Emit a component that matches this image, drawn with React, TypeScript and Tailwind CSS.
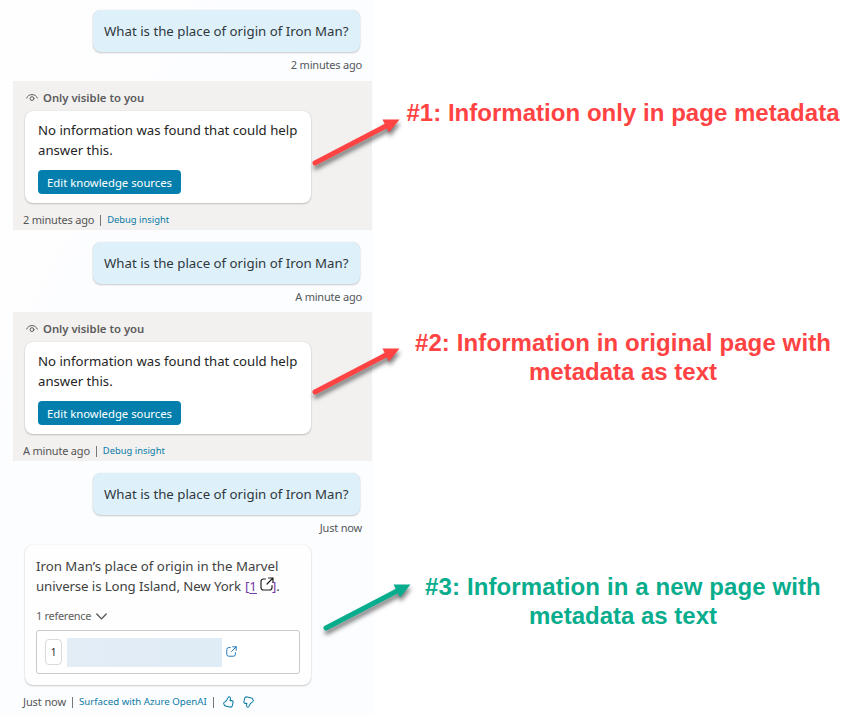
import React from "react";

const BUBBLE_SHADOW = "shadow-[0_1px_2px_rgba(0,0,0,0.2),0_0_1px_rgba(0,0,0,0.16)]";

function Question({ time }: { time: string }) {
  return (
    <div className="flex flex-col items-end pr-[13px]">
      <div className={`flex h-[42px] w-[267px] items-center rounded-lg bg-[#def1fb] pl-[11px] pt-[2px] ${BUBBLE_SHADOW}`}>
        <span className="whitespace-nowrap text-[13.25px] text-[#30383d]">What is the place of origin of Iron Man?</span>
      </div>
      <div className="mt-[5px] mr-[-2px] h-4 whitespace-nowrap text-[11px] leading-4 tracking-[-0.2px] text-[#55585a]">{time}</div>
    </div>
  );
}

function Eye() {
  return (
    <svg width="12" height="10" viewBox="0 0 12 10" fill="none" stroke="#5c5b5a" strokeWidth="1" strokeLinecap="round">
      <path d="M.7 5C1.5 2.8 3.5 1.6 6 1.6S10.500 2.800 11.300 5" />
      <circle cx="6" cy="5.600" r="1.900" />
    </svg>
  );
}

function Separator() {
  return <span className="ml-[6px] mr-[6px] h-[11px] w-px bg-[#777]" />;
}

function Private({ time }: { time: string }) {
  return (
    <div className="ml-[13px] h-[149px] w-[359px] bg-[#f2f1f0] pl-3 pt-[8px]">
      <div className="flex h-[18px] items-center gap-[5px] pl-px text-[11.3px] font-semibold text-[#5c5b5a]">
        <Eye />
        <span className="whitespace-nowrap">Only visible to you</span>
      </div>
      <div className={`mt-[4px] h-[92px] w-[286px] rounded-lg bg-white pl-[13px] pt-[9px] ${BUBBLE_SHADOW}`}>
        <p className="whitespace-nowrap text-[13.2px] leading-5 text-[#242424]">
          No information was found that could help
          <br />
          answer this.
        </p>
        <button className="mt-[10px] flex h-6 w-[143px] items-center justify-center whitespace-nowrap rounded-[4px] bg-[#047fad] pt-[2px] text-[11.3px] text-white">
          Edit knowledge sources
        </button>
      </div>
      <div className="mt-[9px] ml-[-2px] flex h-4 items-center whitespace-nowrap text-[11px] text-[#555]">
        <span className="tracking-[-0.2px]">{time}</span>
        <Separator />
        <a className="pt-px text-[9.4px] text-[#0c7ba5]">Debug insight</a>
      </div>
    </div>
  );
}

function OpenIcon({ size, color }: { size: number; color: string }) {
  return (
    <svg width={size} height={size} viewBox="0 0 14 14" fill="none" stroke={color} strokeWidth="1.200" strokeLinecap="round" strokeLinejoin="round">
      <path d="M5.500 2H3.500Q1 2 1 4.500V10.500Q1 13 3.500 13H9.500Q12 13 12 10.500V8.500M8.500 1H13V5.500M13 1L7 7" />
    </svg>
  );
}

function Thumb({ down }: { down?: boolean }) {
  return (
    <svg className={down ? "rotate-180" : "-mt-px"} width="11" height="12" viewBox="0 0 12 13" fill="none" stroke="#0c7ba5" strokeWidth="1.100" strokeLinejoin="round">
      <path d="M6.800 .8C8.400 1.100 8.400 2.700 7.700 5H9.300Q11.300 5 11 7L10.200 10.500Q9.700 12.500 7.500 12L2.700 10.800Q1.600 10.500 1.300 9.500L.8 8.300Q.4 7.200 1.700 6.600C4.100 5.400 4.800 3.700 5.700 1.400Q6 .7 6.800 .8Z" />
    </svg>
  );
}

function Answer() {
  return (
    <div className="pl-[25px]">
      <div className={`h-[140px] w-[286px] rounded-lg bg-[#fefefe] px-[11px] pt-[11px] ${BUBBLE_SHADOW}`}>
        <div className="whitespace-nowrap text-[13.25px] leading-5 text-[#424242]">
          <div>Iron Man’s place of origin in the Marvel</div>
          <div className="flex h-5 items-center">
            <span className="w-[209px] tracking-[-0.1px]">universe is Long Island, New York</span>
            <span className="text-[#7438a8]">[<u className="underline-offset-2">1</u></span>
            <span className="ml-[3px] -mt-1"><OpenIcon size={14} color="#222" /></span>
            <span className="-ml-[2px] text-[#7438a8]">]</span>.
          </div>
        </div>
        <div className="mt-[12px] flex h-4 items-center gap-[5px] text-[11px] text-[#606060]">
          <span className="whitespace-nowrap tracking-[-0.3px]">1 reference</span>
          <svg width="11" height="7" viewBox="0 0 11 7" fill="none" stroke="#505050" strokeWidth="1.300" strokeLinecap="round" strokeLinejoin="round">
            <path d="M.8 1L5.500 5.900L10.200 1" />
          </svg>
        </div>
        <div className="mt-[6px] flex h-[44px] w-[264px] items-center rounded-[3px] border border-[#c9c9c9] bg-white pl-2">
          <div className="flex h-[26px] w-[17px] items-center justify-center rounded-[4px] border border-[#dadada] text-[10px] text-[#222]">1</div>
          <div className="ml-[5px] h-[29px] w-[155px] bg-gradient-to-r from-[#e3edf6] to-[#dfebf5]" />
          <span className="ml-1 -mt-px"><OpenIcon size={11} color="#1a73b9" /></span>
        </div>
      </div>
      <div className="mt-[9px] ml-[-2px] flex h-4 items-center whitespace-nowrap text-[11px] text-[#555]">
        <span className="tracking-[-0.1px]">Just now</span>
        <Separator />
        <a className="pt-px text-[9.7px] text-[#0c7ba5]">Surfaced with Azure OpenAI</a>
        <span className="ml-[6px] mr-[9px] h-[11px] w-px bg-[#777]" />
        <Thumb />
        <span className="w-[9px]" />
        <Thumb down />
      </div>
    </div>
  );
}

function Arrow({ color }: { color: string }) {
  return (
    <svg className="overflow-visible drop-shadow-[1px_4px_2px_rgba(0,0,0,0.5)]" width="88" height="48" viewBox="0 0 88 48">
      <path d="M3 44L74 7" stroke={color} strokeWidth="5" strokeLinecap="round" />
      <path d="M70.500 .4L87.500 .4L77 13.500Z" fill={color} />
    </svg>
  );
}

export default function App() {
  return (
    <main className="relative flex h-[715px] w-[858px] overflow-hidden bg-white font-['Noto_Sans','Open_Sans',sans-serif]">
      <section className="h-[715px] w-[373px] shrink-0 bg-gradient-to-br from-[#fefefe] via-[#fcfdff] to-[#fcfdff] pt-[10px]">
        <Question time="2 minutes ago" />
        <div className="h-[8px]" />
        <Private time="2 minutes ago" />
        <div className="h-[12px]" />
        <Question time="A minute ago" />
        <div className="h-[7px]" />
        <Private time="A minute ago" />
        <div className="h-[12px]" />
        <Question time="Just now" />
        <div className="h-[9px]" />
        <Answer />
      </section>
      <section className="flex flex-1 flex-col whitespace-nowrap text-center font-['Liberation_Sans',Arial,sans-serif] text-[24px] font-bold leading-[29px]">
        <h2 className="mt-[98px] ml-[32px] w-[436px] tracking-[0.03px] text-[#ff4343]">#1: Information only in page metadata</h2>
        <h2 className="mt-[201px] ml-[32px] w-[436px] text-[#ff4343]">
          <span className="tracking-[0.11px]">#2: Information in original page with</span>
          <br />
          metadata as text
        </h2>
        <h2 className="mt-[186px] ml-[32px] w-[436px] text-[#08ad8d]">
          <span className="tracking-[0.11px]">#3: Information in a new page with</span>
          <br />
          metadata as text
        </h2>
      </section>
      <div className="absolute left-[312px] top-[119px]"><Arrow color="#ff4343" /></div>
      <div className="absolute left-[312px] top-[348px]"><Arrow color="#ff4343" /></div>
      <div className="absolute left-[323px] top-[584px]"><Arrow color="#08ad8d" /></div>
    </main>
  );
}
